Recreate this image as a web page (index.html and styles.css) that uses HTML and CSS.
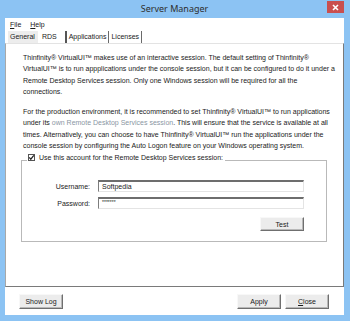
FILE: index.html
```html
<!DOCTYPE html>
<html>
<head>
    <title>Server Manager</title>
    <link rel="stylesheet" href="styles.css">
</head>
<body>
    <div class="window">
        <div class="titlebar">
            <span></span>
            <span class="title">Server Manager</span>
            <span class="close-btn">
                <svg width="7" height="7" viewBox="0 0 7 7"><path d="M1 1L6 6M6 1L1 6" stroke="#fff" stroke-width="1.6"/></svg>
            </span>
        </div>
        <div class="client">
            <div class="menubar">
                <span><u>F</u>ile</span>
                <span><u>H</u>elp</span>
            </div>
            <div class="tabs">
                <span class="tab tab-first">General</span>
                <span class="tab tab-active">RDS</span>
                <span class="tab">Applications</span>
                <span class="tab">Licenses</span>
            </div>
            <div class="panel">
                <p class="intro">Thinfinity® VirtualUI™ makes use of an interactive session. The default setting of Thinfinity®<br>
                VirtualUI™ is to run appplications under the console session, but it can be configured to do it under a<br>
                Remote Desktop Services session. Only one Windows session will be required for all the<br>
                connections.</p>
                <p class="intro">For the production environment, it is recommended to set Thinfinity® VirtualUI™ to run applications<br>
                under its <span class="muted">own Remote Desktop Services session</span>. This will ensure that the service is available at all<br>
                times. Alternatively, you can choose to have Thinfinity® VirtualUI™ run the applications under the<br>
                console session by configuring the Auto Logon feature on your Windows operating system.</p>

                <div class="group">
                    <div class="legend">
                        <span class="check">
                            <svg width="7" height="7" viewBox="0 0 7 7"><path d="M1.2 3.4L2.8 5.2L5.8 1.4" fill="none" stroke="#222" stroke-width="1.2"/></svg>
                        </span>
                        Use this account for the Remote Desktop Services session:
                    </div>
                    <div class="form-row">
                        <label>Username:</label>
                        <div class="input">Softpedia</div>
                    </div>
                    <div class="form-row">
                        <label>Password:</label>
                        <div class="input input-pass">*******</div>
                    </div>
                    <div class="test-row">
                        <button class="btn">Test</button>
                    </div>
                </div>
            </div>
            <div class="footer">
                <button class="btn">Show Log</button>
                <span class="spacer"></span>
                <button class="btn">Apply</button>
                <button class="btn"><u>C</u>lose</button>
            </div>
        </div>
    </div>
</body>
</html>
```

FILE: styles.css
```css
body {
    margin: 0;
    font-family: "Liberation Sans", Arial, sans-serif;
    font-size: 7px;
    color: #1a1a1a;
}
.window {
    width: 350px;
    height: 321px;
    box-sizing: border-box;
    background-color: #8cc3f3;
    padding: 0 6px 6px 5px;
    display: flex;
    flex-direction: column;
}
.titlebar {
    height: 18px;
    display: grid;
    grid-template-columns: 1fr auto 1fr;
}
.title {
    font-family: "Noto Sans", sans-serif;
    font-size: 9px;
    line-height: 18px;
    color: #2e2e2e;
}
.close-btn {
    justify-self: end;
    width: 17px;
    height: 12px;
    margin-top: 1px;
    background-color: #c94f4f;
    display: flex;
    align-items: center;
    justify-content: center;
}
.client {
    flex: 1;
    background-color: #fff;
    display: flex;
    flex-direction: column;
}
.menubar {
    height: 13px;
    display: flex;
    gap: 9px;
    padding-left: 5px;
    line-height: 14px;
}
.tabs {
    height: 12px;
    display: flex;
    padding-left: 3px;
    line-height: 12px;
}
.tab {
    padding: 0 2px;
    border-right: 1px solid #6a6a6a;
}
.tab-first {
    background-color: #ededed;
    border-right: none;
    padding-right: 3px;
}
.tab-active {
    padding: 0 8px 0 4px;
    border-right: 2px solid #555;
}
.panel {
    flex: 1;
    border-top: 1px solid #e3e3e3;
    border-left: 1px solid #a8a8a8;
    border-right: 1px solid #7a7a7a;
    border-bottom: 1px solid #7a7a7a;
    padding-top: 8px;
}
.intro {
    margin: 0 0 9px 17px;
    line-height: 11.3px;
    white-space: nowrap;
}
.muted {
    color: #8a96a3;
}
.group {
    margin: 5px 16px 0 15px;
    border: 1px solid #b9b9b9;
    padding: 0 22px 10px 0;
    display: flex;
    flex-direction: column;
}
.legend {
    align-self: flex-start;
    margin: -9px 0 0 5px;
    padding: 0 2px 0 1px;
    background-color: #fff;
    line-height: 11px;
    display: flex;
    align-items: center;
    gap: 4px;
}
.check {
    width: 7px;
    height: 7px;
    box-sizing: border-box;
    border: 1px solid #555;
    display: flex;
}
.check svg {
    margin: -1px;
}
.form-row {
    display: flex;
    align-items: center;
    gap: 8px;
    margin-top: 5px;
}
.legend + .form-row {
    margin-top: 17px;
}
.form-row label {
    width: 68px;
    text-align: right;
}
.input {
    flex: 1;
    height: 12px;
    box-sizing: border-box;
    border-top: 2px solid #6d6d6d;
    border-left: 1px solid #7d7d7d;
    border-right: 1px solid #e4e4e4;
    border-bottom: 1px solid #e4e4e4;
    padding-left: 3px;
    line-height: 9px;
}
.input-pass {
    font-size: 5px;
    line-height: 6px;
}
.test-row {
    display: flex;
    justify-content: flex-end;
    margin-top: 8px;
}
.btn {
    width: 44px;
    height: 14px;
    padding: 0;
    font-family: "Liberation Sans", Arial, sans-serif;
    font-size: 7px;
    color: #1a1a1a;
    background-color: #ececec;
    border: 1px solid;
    border-color: #f8f8f8 #6f6f6f #6f6f6f #f8f8f8;
    box-shadow: inset -1px -1px 0 #b8b8b8;
}
.footer {
    height: 28px;
    box-sizing: border-box;
    display: flex;
    gap: 4px;
    padding: 7px 15px 0 14px;
}
.footer .btn {
    height: 15px;
}
.spacer {
    flex: 1;
}
```
